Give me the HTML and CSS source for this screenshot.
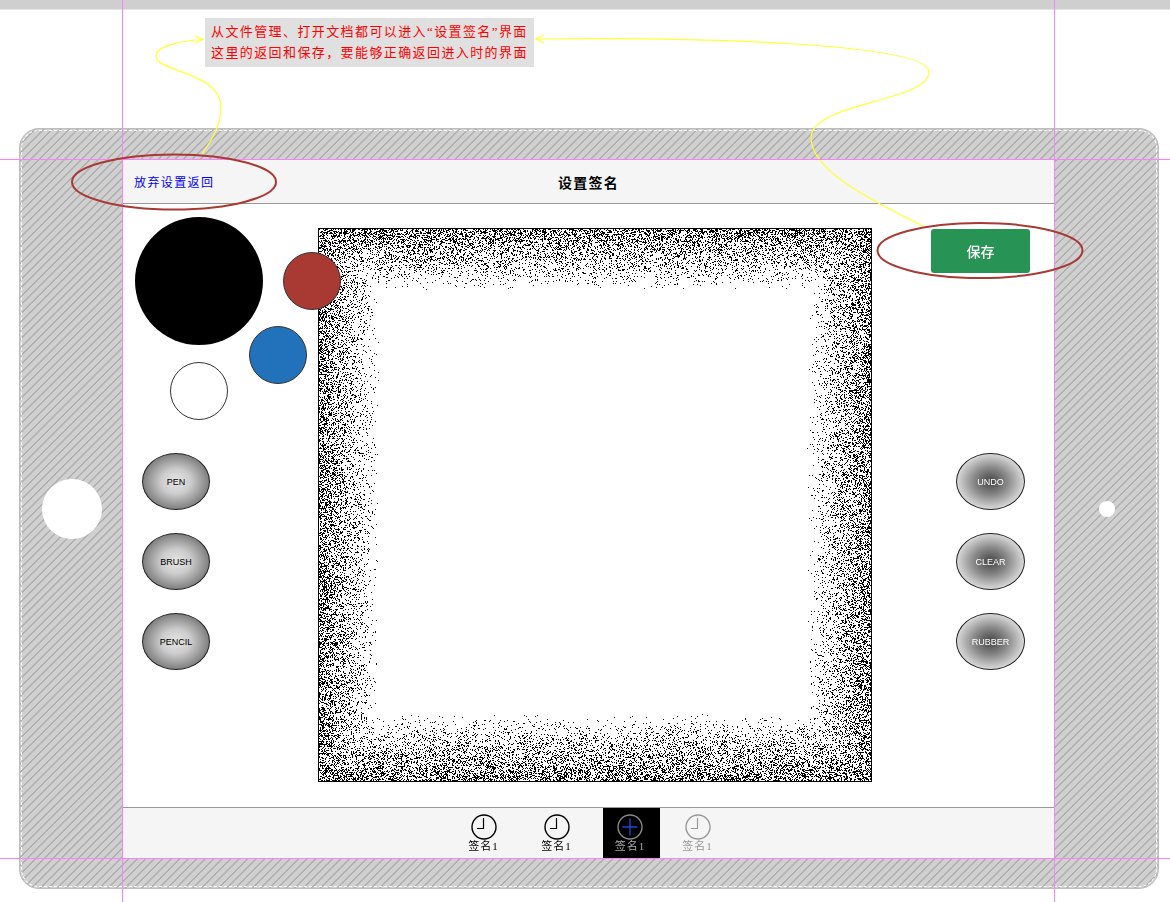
FILE: index.html
```html
<!doctype html>
<html lang="zh-CN">
<head>
    <meta charset="UTF-8">
    <title>设置签名</title>
    <link rel="stylesheet" href="styles.css">
</head>
<body>

<div class="top-bar"></div>

<div class="note">
    <div>从文件管理、打开文档都可以进入“设置签名”界面</div>
    <div>这里的返回和保存，要能够正确返回进入时的界面</div>
</div>

<div class="device">
    <div class="bezel bezel-left"><span class="home-button"></span></div>
    <div class="screen">
        <header class="screen-header">
            <a class="back-link">放弃设置返回</a>
            <h1 class="screen-title">设置签名</h1>
        </header>
        <main class="screen-main">
            <div class="left-col">
                <div class="palette">
                    <span class="swatch swatch-black"></span>
                    <span class="swatch swatch-red"></span>
                    <span class="swatch swatch-blue"></span>
                    <span class="swatch swatch-white"></span>
                </div>
                <div class="tools">
                    <button class="tool tool-light">PEN</button>
                    <button class="tool tool-light">BRUSH</button>
                    <button class="tool tool-light">PENCIL</button>
                </div>
            </div>
            <canvas class="sign-pad" id="sign-pad" width="552" height="552"></canvas>
            <div class="right-col">
                <button class="save-button">保存</button>
                <div class="tools tools-right">
                    <button class="tool tool-dark">UNDO</button>
                    <button class="tool tool-dark">CLEAR</button>
                    <button class="tool tool-dark">RUBBER</button>
                </div>
            </div>
        </main>
        <footer class="screen-footer">
            <div class="tab">
                <svg class="tab-icon" width="26" height="26" viewBox="0 0 26 26">
                    <circle cx="13" cy="13" r="12" fill="none" stroke="#000" stroke-width="1.4"/>
                    <path d="M12.500 4v10.500H6" fill="none" stroke="#000" stroke-width="1.2"/>
                </svg>
                <span>签名1</span>
            </div>
            <div class="tab">
                <svg class="tab-icon" width="26" height="26" viewBox="0 0 26 26">
                    <circle cx="13" cy="13" r="12" fill="none" stroke="#000" stroke-width="1.4"/>
                    <path d="M12.500 4v10.500H6" fill="none" stroke="#000" stroke-width="1.2"/>
                </svg>
                <span>签名1</span>
            </div>
            <div class="tab tab-active">
                <svg class="tab-icon" width="26" height="26" viewBox="0 0 26 26">
                    <circle cx="13" cy="13" r="12" fill="none" stroke="#888" stroke-width="1.4"/>
                    <path d="M13 4.500v17M5.500 13h15" fill="none" stroke="#2244dd" stroke-width="1.4"/>
                </svg>
                <span>签名1</span>
            </div>
            <div class="tab tab-disabled">
                <svg class="tab-icon" width="26" height="26" viewBox="0 0 26 26">
                    <circle cx="13" cy="13" r="12" fill="none" stroke="#999" stroke-width="1.4"/>
                    <path d="M12.500 4v10.500H6" fill="none" stroke="#999" stroke-width="1.2"/>
                </svg>
                <span>签名1</span>
            </div>
        </footer>
    </div>
    <div class="bezel bezel-right"><span class="camera"></span></div>
</div>

<!-- annotations drawn over the mockup -->
<svg class="annotations" width="1170" height="902" viewBox="0 0 1170 902">
    <g fill="none" stroke="#ffff33" stroke-width="1.2">
        <path d="M202 154C212 140 221 125 221 107C221 72 156 72 156 56C156 46 180 41 203 39.500"/>
        <path d="M195 36L203 39.500L195 43"/>
        <path d="M923 226C870 200 811 170 811 138C811 102 929 102 929 72C929 42 680 37 536 39"/>
        <path d="M544 35L536 39L544 43"/>
    </g>
    <g fill="none" stroke="#ff80ff" stroke-width="1">
        <path d="M122.500 0V902M1054.500 0V902M0 159.500H1170M0 858.500H1170"/>
    </g>
    <g fill="none" stroke="#a83a33" stroke-width="2">
        <ellipse cx="174" cy="182" rx="102" ry="27.500"/>
        <ellipse cx="980" cy="250.500" rx="102.500" ry="27.500"/>
    </g>
</svg>

<script src="noise.js"></script>
</body>
</html>
```

FILE: styles.css
```css
body {
    margin: 0;
    height: 902px;
    position: relative;
    overflow: hidden;
    background-color: #fff;
    font-family: "Liberation Serif", "Noto Sans CJK SC", serif;
}

.top-bar {
    height: 9px;
    background-color: #cfcfcf;
    border-bottom: 1px solid #e4e4e4;
}

.note {
    width: 329px;
    height: 49px;
    box-sizing: border-box;
    margin: 8px 0 0 205px;
    padding: 3px 0 0 6px;
    background-color: #e0e0e0;
    color: #ff0000;
    font-size: 13px;
    line-height: 21px;
    letter-spacing: 1.4px;
    white-space: nowrap;
}

.device {
    width: 1140px;
    height: 761px;
    box-sizing: border-box;
    margin: 61px 0 0 19px;
    display: flex;
    align-items: center;
    border: 1px solid #bdbdbd;
    border-radius: 20px;
    outline: 1px dashed #fff;
    outline-offset: -3px;
    background-color: #cdcdcd;
    background-image: repeating-linear-gradient(135deg, #d0d0d0 0, #d0d0d0 4px, #b0b0b0 4.500px, #b0b0b0 5.500px, #d0d0d0 6px);
}

.bezel {
    display: flex;
    justify-content: center;
}

.bezel-left {
    width: 103px;
}

.bezel-right {
    width: 104px;
    padding-left: 2px;
    box-sizing: border-box;
}

.home-button {
    width: 60px;
    height: 60px;
    border-radius: 50%;
    background-color: #fff;
}

.camera {
    width: 16px;
    height: 16px;
    border-radius: 50%;
    background-color: #fff;
}

.screen {
    width: 931px;
    height: 698px;
    flex: none;
    align-self: flex-start;
    margin-top: 31px;
    display: flex;
    flex-direction: column;
    background-color: #fff;
}

.screen-header {
    height: 43px;
    flex: none;
    display: flex;
    align-items: center;
    justify-content: center;
    position: relative;
    background-color: #f5f5f5;
    border-bottom: 1px solid #999;
}

.back-link {
    position: absolute;
    left: 11px;
    color: #0000ff;
    font-size: 12px;
    letter-spacing: 1.4px;
}

.screen-title {
    margin: 0;
    font-size: 14px;
    letter-spacing: 1.2px;
    color: #000;
}

.screen-main {
    flex: 1;
    display: flex;
}

.left-col {
    width: 195px;
    flex: none;
    padding-top: 13px;
}

.palette {
    height: 236px;
    position: relative;
    z-index: 1;
}

.swatch {
    position: absolute;
    width: 56px;
    height: 56px;
    border: 1px solid #333;
    border-radius: 50%;
}

.swatch-black {
    left: 12px;
    top: 0;
    width: 128px;
    height: 128px;
    border: none;
    background-color: #000;
}

.swatch-red {
    left: 160px;
    top: 35px;
    background-color: #a83a33;
}

.swatch-blue {
    left: 126px;
    top: 109px;
    background-color: #2271bb;
}

.swatch-white {
    left: 47px;
    top: 145px;
    background-color: #fff;
}

.tools {
    display: flex;
    flex-direction: column;
    gap: 23px;
    padding-left: 19px;
}

.tools-right {
    padding-left: 84px;
    margin-top: 180px;
}

.tool {
    width: 68px;
    height: 57px;
    padding: 0;
    border: 1px solid #222;
    border-radius: 50%;
    font-family: "Liberation Sans", Arial, sans-serif;
    font-size: 9px;
}

.tool-light {
    color: #000;
    background: radial-gradient(closest-side, #e6e6e6, #cccccc 45%, #808080);
}

.tool-dark {
    width: 69px;
    color: #fff;
    background: radial-gradient(closest-side, #444, #888 50%, #d8d8d8);
}

.sign-pad {
    display: block;
    flex: none;
    width: 552px;
    height: 552px;
    margin-top: 24px;
    border: 1px solid #000;
}

.right-col {
    flex: 1;
    padding-top: 25px;
}

.save-button {
    display: block;
    width: 99px;
    height: 44px;
    margin-left: 59px;
    padding: 0;
    border: none;
    border-radius: 3px;
    background-color: #279455;
    color: #fff;
    font-family: "Noto Sans CJK SC", sans-serif;
    font-size: 14px;
    font-weight: 500;
}

.screen-footer {
    height: 50px;
    flex: none;
    display: flex;
    padding-left: 332px;
    background-color: #f5f5f5;
    border-top: 1px solid #999;
}

.tab {
    width: 57px;
    margin-right: 16px;
    display: flex;
    flex-direction: column;
    align-items: center;
    padding-top: 6px;
    box-sizing: border-box;
    font-size: 11px;
    line-height: 12px;
    letter-spacing: 1px;
    color: #000;
}

.tab-icon {
    display: block;
}

.tab-active {
    margin-left: 2px;
    margin-right: 9px;
    padding-right: 3px;
    background-color: #000;
    color: #aaa;
}

.tab-disabled {
    color: #999;
}

.annotations {
    position: absolute;
    left: 0;
    top: 0;
    z-index: 2;
    pointer-events: none;
}
```

FILE: noise.js
```js
// fake pen speckle around the edge of the signature pad
const pad = document.getElementById('sign-pad');
const ctx = pad.getContext('2d');
const size = pad.width;
const image = ctx.createImageData(size, size);

let seed = 20160;
function rand() {
    seed = (seed * 1664525 + 1013904223) % 4294967296;
    return seed / 4294967296;
}

function edge(dist, reach) {
    if (dist >= reach) return 0;
    return 0.46 * Math.pow(1 - dist / reach, 1.1);
}

for (let y = 0; y < size; y++) {
    for (let x = 0; x < size; x++) {
        const density = Math.max(edge(x, 61), edge(size - 1 - x, 64), edge(y, 61), edge(size - 1 - y, 67));
        const value = rand() < density ? 0 : 255;
        const i = (y * size + x) * 4;
        image.data[i] = value;
        image.data[i + 1] = value;
        image.data[i + 2] = value;
        image.data[i + 3] = 255;
    }
}

ctx.putImageData(image, 0, 0);
```
